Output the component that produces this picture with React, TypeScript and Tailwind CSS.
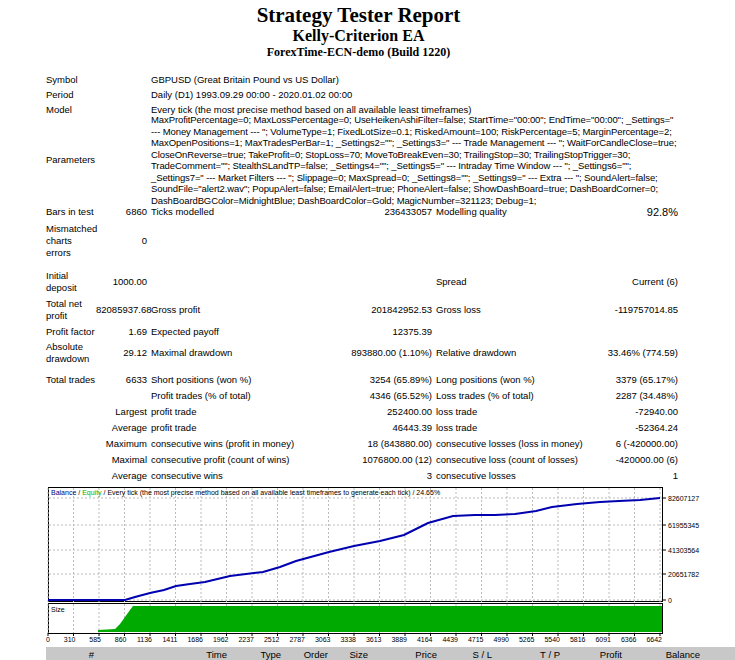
import React from "react";

const F = { fontFamily: "'Liberation Sans', Arial, sans-serif" };

const params =
  'MaxProfitPercentage=0; MaxLossPercentage=0; UseHeikenAshiFilter=false; StartTime="00:00"; EndTime="00:00"; _Settings=" --- Money Management --- "; VolumeType=1; FixedLotSize=0.1; RiskedAmount=100; RiskPercentage=5; MarginPercentage=2; MaxOpenPositions=1; MaxTradesPerBar=1; _Settings2=""; _Settings3=" --- Trade Management --- "; WaitForCandleClose=true; CloseOnReverse=true; TakeProfit=0; StopLoss=70; MoveToBreakEven=30; TrailingStop=30; TrailingStopTrigger=30; TradeComment=""; StealthSLandTP=false; _Settings4=""; _Settings5=" --- Intraday Time Window --- "; _Settings6=""; _Settings7=" --- Market Filters --- "; Slippage=0; MaxSpread=0; _Settings8=""; _Settings9=" --- Extra --- "; SoundAlert=false; SoundFile="alert2.wav"; PopupAlert=false; EmailAlert=true; PhoneAlert=false; ShowDashBoard=true; DashBoardCorner=0; DashBoardBGColor=MidnightBlue; DashBoardColor=Gold; MagicNumber=321123; Debug=1;';

const G = "grid grid-cols-[46px_51px_130px_147px_150px_88px] gap-x-[4px] items-center";

function R({ h, c }: { h: string; c: React.ReactNode[] }) {
  return <div className={`${G} ${h}`}>{c}</div>;
}

const ticks = ["0","310","585","860","1136","1411","1686","1962","2237","2512","2787","3063","3338","3613","3889","4164","4439","4715","4990","5265","5540","5816","6091","6366","6642"];

const pts: [number, number][] = [[48,582],[125,582],[135,579],[150,575],[164,572],[176,568],[190,566],[205,564],[230,558],[263,554],[280,549],[296,543],[329,534],[354,528],[380,523],[404,517],[416,511],[428,505],[453,498],[475,497],[495,497],[515,496],[536,493],[552,489],[577,486],[600,484],[619,483],[640,482],[660,480]];

function Chart() {
  const ys = [[14, "82607127"], [41, "61955345"], [66, "41303564"], [90, "20651782"], [116, "0"]] as const;
  return (
    <svg width="700" height="160" className="block ml-[40px]" style={{ fontFamily: "'Liberation Sans', sans-serif" }}>
      <rect x="8.5" y="3.5" width="614" height="114" fill="white" stroke="#000" />
      <rect x="8.5" y="119.5" width="614" height="30" fill="white" stroke="#000" />
      {ticks.map((t, i) => {
        const x = 8 + i * 25.5;
        return (
          <g key={t}>
            <line x1={x} x2={x} y1={4} y2={149} stroke="#bbb" strokeDasharray="2 2" />
            <line x1={x} x2={x} y1={149} y2={152} stroke="#000" />
            <text x={x + 2} y={158} fontSize="7" textAnchor="end">{t}</text>
          </g>
        );
      })}
      {ys.map(([y, l]) => (
        <g key={l}>
          <line x1={9} x2={622} y1={y} y2={y} stroke="#bbb" strokeDasharray="2 2" />
          <line x1={622} x2={626} y1={y} y2={y} stroke="#000" />
          <text x={628} y={y + 3} fontSize="7">{l}</text>
        </g>
      ))}
      <text x="11" y="11" fontSize="7">
        <tspan fill="#000080">Balance</tspan> / <tspan fill="#00b000">Equity</tspan> / Every tick (the most precise method based on all available least timeframes to generate each tick) / 24.65%
      </text>
      <polyline points={pts.map(([x, y]) => `${x - 40},${y - 466}`).join(" ")} fill="none" stroke="#0000b0" strokeWidth="2" />
      <text x="11" y="128" fontSize="7">Size</text>
      <polygon points="58,148 58,146 75,145 80,140 85,133 90,126 93,122 622,122 622,148" fill="#00aa00" />
    </svg>
  );
}

export default function App() {
  const L = (t: React.ReactNode, k: string) => <div key={k} className="whitespace-nowrap leading-[12px]">{t}</div>;
  const V = (t: React.ReactNode, k: string) => <div key={k} className="text-right whitespace-nowrap">{t}</div>;
  const E = (k: string) => <div key={k} />;
  return (
    <div className="w-[735px] h-[660px] bg-white text-black text-[9.5px] overflow-hidden" style={F}>
      <div className="w-[717px] text-center pt-[3px]" style={{ fontFamily: "'Liberation Serif', serif" }}>
        <div className="text-[21px] font-bold leading-[24px]">Strategy Tester Report</div>
        <div className="text-[16px] font-bold leading-[18px]">Kelly-Criterion EA</div>
        <div className="text-[12px] font-bold leading-[14px]">ForexTime-ECN-demo (Build 1220)</div>
      </div>
      <div className="pl-[46px] pt-[14px]">
        {[
          ["Symbol", "GBPUSD (Great Britain Pound vs US Dollar)"],
          ["Period", "Daily (D1) 1993.09.29 00:00 - 2020.01.02 00:00"],
          ["Model", "Every tick (the most precise method based on all available least timeframes)"],
        ].map(([a, b]) => (
          <div key={a} className="flex h-[15px] items-center">
            <div className="w-[105px]">{a}</div>
            <div>{b}</div>
          </div>
        ))}
        <div className="flex items-center h-[84px]">
          <div className="w-[105px]">Parameters</div>
          <div className="w-[526px] leading-[11.5px] tracking-[-0.1px]">{params}</div>
        </div>
        <R h="h-[20px]" c={[L("Bars in test", "a"), V("6860", "b"), L("Ticks modelled", "c"), V("236433057", "d"), L("Modelling quality", "e"), <div key="f" className="text-right text-[11px]">92.8%</div>]} />
        <R h="h-[38px]" c={[L(<>Mismatched<br />charts<br />errors</>, "a"), V("0", "b"), E("c"), E("d"), E("e"), E("f")]} />
        <R h="h-[28px] mt-[8px]" c={[L(<>Initial<br />deposit</>, "a"), V("1000.00", "b"), E("c"), E("d"), L("Spread", "e"), V("Current (6)", "f")]} />
        <R h="h-[28px]" c={[L(<>Total net<br />profit</>, "a"), V("82085937.68", "b"), L("Gross profit", "c"), V("201842952.53", "d"), L("Gross loss", "e"), V("-119757014.85", "f")]} />
        <R h="h-[16px]" c={[L("Profit factor", "a"), V("1.69", "b"), L("Expected payoff", "c"), V("12375.39", "d"), E("e"), E("f")]} />
        <R h="h-[26px]" c={[L(<>Absolute<br />drawdown</>, "a"), V("29.12", "b"), L("Maximal drawdown", "c"), V("893880.00 (1.10%)", "d"), L("Relative drawdown", "e"), V("33.46% (774.59)", "f")]} />
        <div className="h-[6px]" />
        {[
          ["Total trades", "6633", "Short positions (won %)", "3254 (65.89%)", "Long positions (won %)", "3379 (65.17%)"],
          ["", "", "Profit trades (% of total)", "4346 (65.52%)", "Loss trades (% of total)", "2287 (34.48%)"],
          ["", "Largest", "profit trade", "252400.00", "loss trade", "-72940.00"],
          ["", "Average", "profit trade", "46443.39", "loss trade", "-52364.24"],
          ["", "Maximum", "consecutive wins (profit in money)", "18 (843880.00)", "consecutive losses (loss in money)", "6 (-420000.00)"],
          ["", "Maximal", "consecutive profit (count of wins)", "1076800.00 (12)", "consecutive loss (count of losses)", "-420000.00 (6)"],
          ["", "Average", "consecutive wins", "3", "consecutive losses", "1"],
        ].map((r, i) => (
          <R key={i} h="h-[16px]" c={[L(r[0], "a"), <div key="b" className="text-right whitespace-nowrap" style={{ direction: "rtl" }}>{r[1]}</div>, L(r[2], "c"), V(r[3], "d"), L(r[4], "e"), V(r[5], "f")]} />
        ))}
      </div>
      <Chart />
      <div className="mt-[3px] ml-[46px] w-[690px] h-[17px] bg-[#c8c8c8] flex items-center">
        <div className="w-[48px] text-right">#</div>
        <div className="w-[133px] text-right">Time</div>
        <div className="w-[54px] text-right">Type</div>
        <div className="w-[47px] text-right">Order</div>
        <div className="w-[40px] text-right">Size</div>
        <div className="w-[69px] text-right">Price</div>
        <div className="w-[55px] text-right">S / L</div>
        <div className="w-[68px] text-right">T / P</div>
        <div className="w-[62px] text-right">Profit</div>
        <div className="w-[78px] text-right">Balance</div>
      </div>
      <div className="ml-[46px] w-[690px] h-[16px] flex items-center">
        <div className="w-[48px] text-right">1</div>
        <div className="w-[133px] text-right">1993.09.29 00:00</div>
        <div className="w-[54px] text-right">buy</div>
        <div className="w-[47px] text-right">1</div>
        <div className="w-[40px] text-right">0.07</div>
        <div className="w-[69px] text-right">1.51306</div>
        <div className="w-[55px] text-right">0.00000</div>
        <div className="w-[68px] text-right">0.00000</div>
      </div>
    </div>
  );
}
